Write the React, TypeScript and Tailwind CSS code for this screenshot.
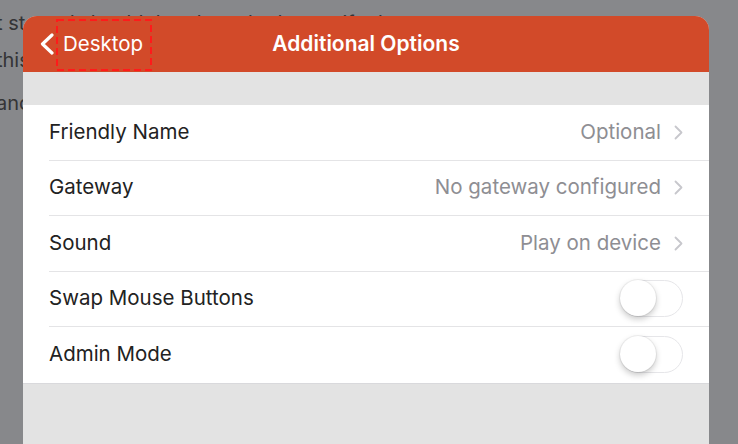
import { useState } from 'react'

type Row = {
  label: string
  value?: string
  toggle?: boolean
}

const rows: Row[] = [
  { label: 'Friendly Name', value: 'Optional' },
  { label: 'Gateway', value: 'No gateway configured' },
  { label: 'Sound', value: 'Play on device' },
  { label: 'Swap Mouse Buttons', toggle: true },
  { label: 'Admin Mode', toggle: true },
]

function Toggle() {
  const [on, setOn] = useState(false)
  return (
    <button
      onClick={() => setOn(!on)}
      className={`relative h-[37px] w-[63px] rounded-full border-[1.5px] ${on ? 'border-[#4cd964] bg-[#4cd964]' : 'border-[#e6e6e9] bg-white'}`}
    >
      <span
        className={`absolute top-[-1px] h-[36px] w-[36px] rounded-full bg-white shadow-[0_3px_6px_rgba(0,0,0,0.22),0_0_0_1px_rgba(0,0,0,0.05)] ${on ? 'left-[25px]' : 'left-[-1px]'}`}
      />
    </button>
  )
}

function Chevron() {
  return (
    <svg width="9" height="15" viewBox="0 0 9 15" fill="none">
      <path d="M1.5 1.5 L7.5 7.5 L1.5 13.5" stroke="#c7c7cc" strokeWidth="1.8" strokeLinecap="round" strokeLinejoin="round" />
    </svg>
  )
}

export default function App() {
  return (
    <div
      className="relative h-[444px] w-[738px] overflow-hidden bg-[#87888b]"
      style={{ fontFamily: 'Inter, "Liberation Sans", sans-serif' }}
    >
      {/* page behind the sheet */}
      <div className="-ml-[4px] pt-[5px] text-[20px] leading-[37px] text-[#343436] whitespace-nowrap">
        <p>t started should then be asked to verify that you want to connect to</p>
        <p>this remote desktop</p>
        <p className="mt-[6px]">and</p>
      </div>

      {/* sheet */}
      <div className="absolute left-[23px] top-[16px] h-[440px] w-[686px] overflow-hidden rounded-t-[14px] bg-[#e3e3e3]">
        {/* header */}
        <div className="relative flex h-[56px] items-center bg-[#d24a29] text-white">
          <div className="flex items-center pl-[16px]">
            <svg width="16" height="22" viewBox="0 0 16 22" fill="none">
              <path d="M13 2 L3.5 11 L13 20" stroke="white" strokeWidth="3.2" strokeLinecap="round" strokeLinejoin="round" />
            </svg>
            <span className="ml-[8px] text-[20.5px]">Desktop</span>
          </div>
          <div className="absolute inset-x-0 text-center text-[21px] font-semibold">Additional Options</div>
          {/* annotation */}
          <svg className="absolute left-[33px] top-[3px]" width="96" height="52" viewBox="0 0 96 52" fill="none">
            <rect x="1" y="1" width="94" height="50" stroke="#ff1a1a" strokeWidth="2" strokeDasharray="7 4" />
          </svg>
        </div>

        <div className="h-[33px]" />

        <div className="border-b border-[#d9d9dc] bg-white">
          {rows.map((row, i) => (
            <div key={row.label} className="pl-[26px]">
              <div
                className={`flex h-[55.5px] items-center pr-[26px] text-[20.5px] ${i < rows.length - 1 ? 'border-b border-[#e4e4e6]' : ''}`}
              >
                <span className="flex-1 text-[#222]">{row.label}</span>
                {row.toggle ? (
                  <Toggle />
                ) : (
                  <div className="flex items-center gap-[13px]">
                    <span className="text-[#8e8e93]">{row.value}</span>
                    <Chevron />
                  </div>
                )}
              </div>
            </div>
          ))}
        </div>
      </div>
    </div>
  )
}
